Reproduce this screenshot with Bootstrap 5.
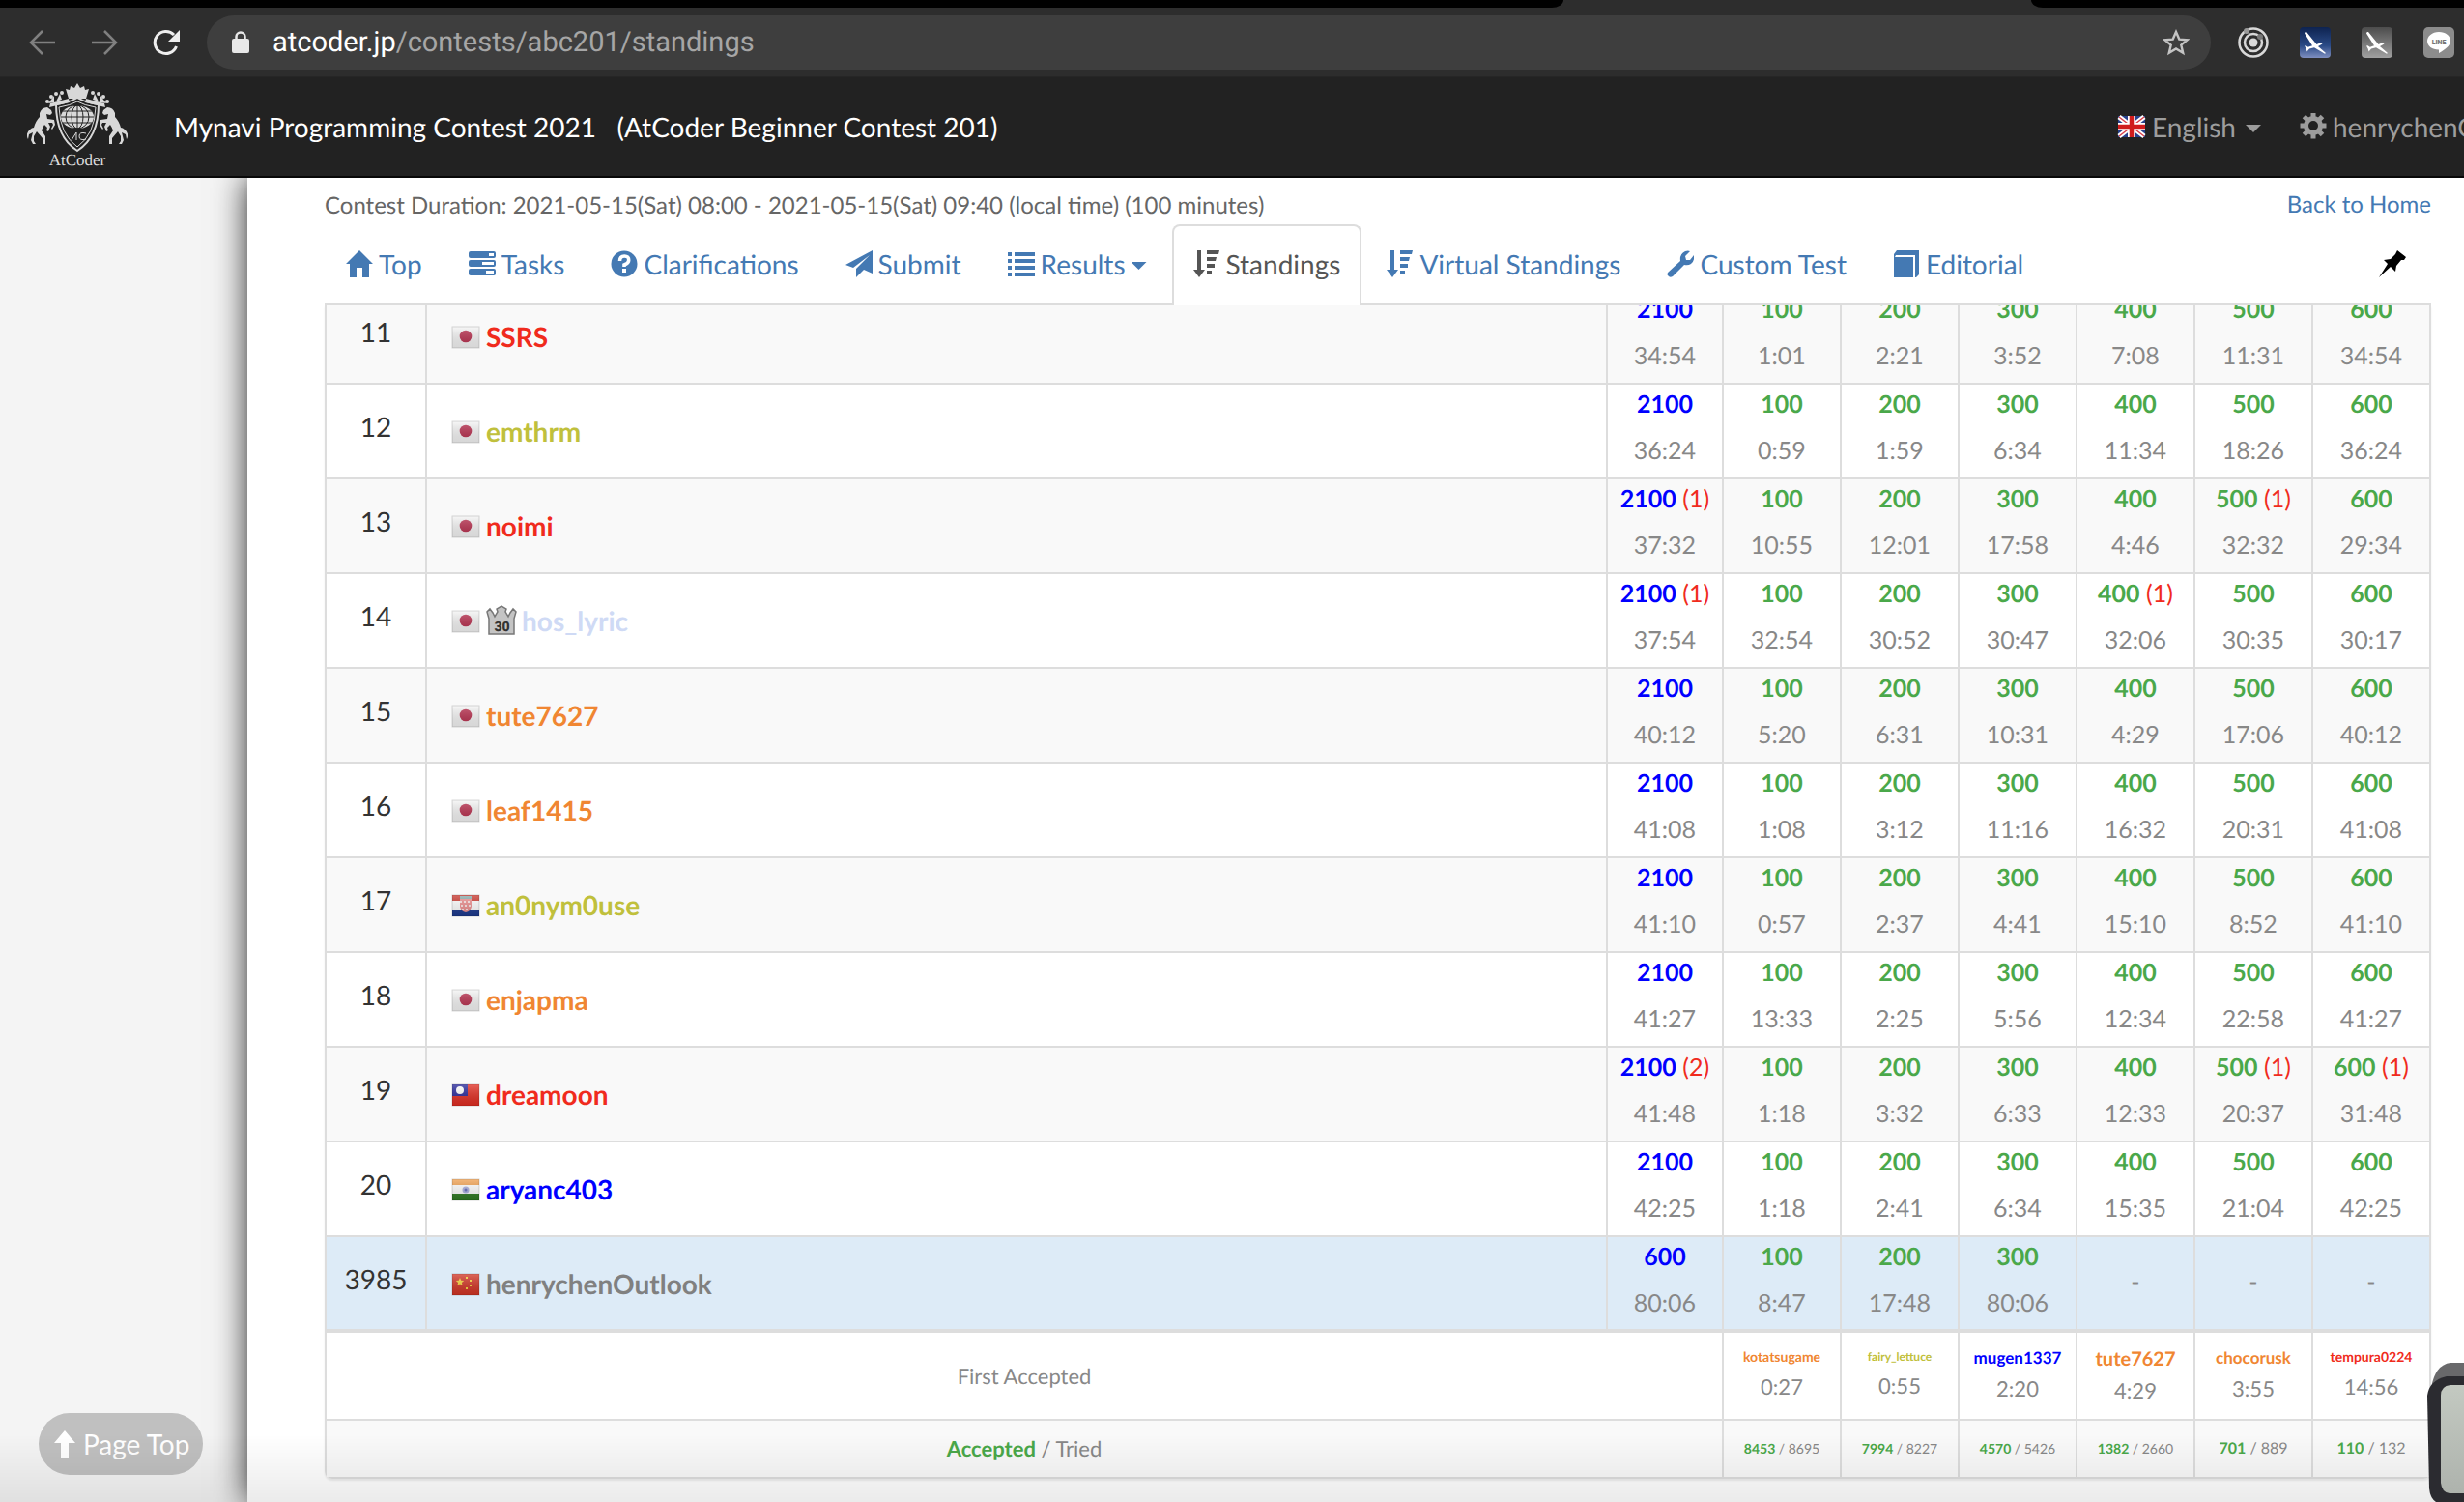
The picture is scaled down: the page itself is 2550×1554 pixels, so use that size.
<!DOCTYPE html>
<html lang="en">
<head>
<meta charset="utf-8">
<meta name="viewport" content="width=device-width, initial-scale=1">
<title>Standings - AtCoder Beginner Contest 201</title>
<link href="https://cdn.jsdelivr.net/npm/bootstrap@5.3.0/dist/css/bootstrap.min.css" rel="stylesheet">
<style>
body{font-family:Lato,"Open Sans",sans-serif;font-size:28px;line-height:40px;color:#333;background:#f4f4f4;min-height:100vh;overflow:hidden;text-rendering:geometricPrecision}
svg{display:block;flex:none}
a{color:#4479b3;text-decoration:none}
.tabstrip{height:8px;background:#000}
.activetab{width:508px;margin-right:436px;height:8px;background:#2d2d2d;position:relative}
.activetab::before,.activetab::after{content:"";position:absolute;top:0;width:12px;height:8px;background:#000}
.activetab::before{left:0;border-bottom-right-radius:12px 8px}
.activetab::after{right:0;border-bottom-left-radius:12px 8px}
.toolbar{height:72px;background:#2d2d2d;padding:0 10px 0 30px;border-bottom:1px solid #262626}
.tool{background:none;border:0;padding:0;line-height:0}
.tool + .tool{margin-left:36px}
.omnibox{height:56px;border-radius:28px;background:#3e3e3e;padding:0 22px 0 26px;margin:0 28px}
.urltext{font:29px/40px Roboto,sans-serif;color:#a6a6a6;white-space:nowrap}
.urltext b{font-weight:400;color:#fff}
.extensions{gap:32px}
.mainnav{height:104px;background:#222;border-bottom:2px solid #080808;padding:0 0 0 28px;white-space:nowrap}
.mainnav .title{color:#fff}
.mainnav .side{gap:40px}
.mainnav .side a{color:#9d9d9d;gap:6px}
.who{width:170px;overflow:hidden}
.caretdown{width:16px;height:8px;background:currentColor;clip-path:polygon(0 0,100% 0,50% 100%);margin-top:4px}
.sheet{margin-left:256px;padding:0 34px 0 80px;background:#fff;box-shadow:0 0 32px rgba(0,0,0,.85);min-height:calc(100vh - 184px)}
.page{overflow:hidden;position:relative}
.info{font-size:24px;line-height:34px;color:#666;padding-top:12px;height:48px}
.info a{line-height:31px}
.tabs{border-bottom:2px solid #ddd;height:84px;gap:4px}
.tabs a{display:flex;align-items:center;gap:6px;border:2px solid transparent;border-bottom:0;padding:18px 20px 20px;height:82px}
.tabs a.on{color:#555;border-color:#ddd;border-radius:8px 8px 0 0;background:#fff;height:84px;margin-bottom:-2px;padding-bottom:22px}
.tabs .pin{margin-left:auto;padding-right:24px}
.clip{overflow:hidden;border-radius:0 0 8px 8px;box-shadow:0 2px 2px rgba(0,0,0,.08)}
.rank-table{margin:-18px 0 0;width:100%;table-layout:fixed;border-collapse:collapse;text-align:center}
.rank-table td{border:2px solid #ddd;padding:0}
.rank-table tbody tr{height:98px}
.rank-table tbody tr:nth-child(odd),.rank-table tfoot tr:last-child{background:#f9f9f9}
.rank-table tbody tr.me{background:#ddebf7}
.rank-table .num{padding-bottom:10px}
.rank-table .who-cell{text-align:left;padding-left:24px}
.who-cell div{gap:5px}
.who-cell a{font-weight:700}
.rank-table .none{padding-bottom:4px}
.pt{vertical-align:top}
.pt p,.none{font-size:25px;line-height:40px;margin:0;color:#888;white-space:nowrap}
.pt p+p{margin-top:8px}
.pt b,.ac{font-weight:700;color:#4aa84a}
.pt .tot{color:#00f}
.pt i{font-style:normal;color:#f02b1d}
.rank-table tfoot{border-top:4px solid #ddd;color:#888;font-size:22px}
.first{height:92px}
.rank-table .first td{vertical-align:top;padding-top:14px}
.rank-table .first td:first-child{vertical-align:middle;padding:0}
.first p{margin:0;line-height:40px;font-size:22px}
.first a{display:block;font-weight:700}
.tried{height:60px}
.s12{font-size:12px;line-height:21px}.s14{font-size:14px;line-height:22px}.s16{font-size:16px;line-height:22px}.s17{font-size:17px;line-height:24px}.s20{font-size:20px;line-height:26px}
.red{color:#f02b1d}.orange{color:#f08632}.yellow{color:#c0c03c}.blue{color:#00f}.pale{color:#cfdaf5}.gray{color:#808080}
.pagetop{position:fixed;left:40px;bottom:28px;height:64px;border:0;border-radius:32px;background:#c0c0c0;color:#fff;padding:0 14px 0 16px;gap:8px}
.dockshade{position:fixed;left:0;right:0;bottom:0;height:70px;background:linear-gradient(rgba(0,0,0,0),rgba(0,0,0,.08));pointer-events:none}
.gadget{position:fixed;right:0;bottom:0}
</style>
<script src="https://cdn.jsdelivr.net/npm/bootstrap@5.3.0/dist/js/bootstrap.bundle.min.js"></script>
</head>
<body>
<svg width="0" height="0" class="position-absolute" aria-hidden="true">
<defs><linearGradient id="gloss" x2="0" y2="1"><stop stop-color="#fff" stop-opacity=".25"/><stop offset="1" stop-color="#000" stop-opacity=".12"/></linearGradient></defs>
<symbol id="jp" viewBox="0 0 32 32"><rect x="2" y="6" width="28" height="22" fill="#f5f5f5"/><circle cx="16" cy="16" r="6.3" fill="#b9304f"/></symbol>
<symbol id="hr" viewBox="0 0 32 32"><path fill="#c9372e" d="M2 6h28v7H2z"/><path fill="#fff" d="M2 12h28v10H2z"/><path fill="#1d3a8f" d="M2 22h28v6H2z"/><path fill="#ee8f8f" d="M10 9h12v9q-1 5-6 6-5-1-6-6z"/><path stroke="#fff" stroke-width="1.500" stroke-dasharray="2 2" d="M10 13h12M11 17h10M12 21h8"/><path fill="#8aa" d="M10 7h12v3H10z"/></symbol>
<symbol id="tw" viewBox="0 0 32 32"><path fill="#e22d22" d="M2 6h28v22H2z"/><path fill="#26269a" d="M2 6h16v12H2z"/><circle cx="10" cy="12" r="4" fill="#fff"/></symbol>
<symbol id="in" viewBox="0 0 32 32"><path fill="#f0a050" d="M2 6h28v7H2z"/><path fill="#fff" d="M2 12h28v10H2z"/><path fill="#2f7a22" d="M2 21h28v7H2z"/><circle cx="16" cy="17" r="3.500" fill="#aab0e0"/><circle cx="16" cy="17" r="1.500" fill="#6068b8"/></symbol>
<symbol id="cn" viewBox="0 0 32 32"><path fill="#d23424" d="M2 6h28v22H2z"/><path fill="#f8d33a" d="m10 10 1.200 2.800 3 .2-2.300 2 .8 3-2.700-1.600-2.700 1.600.8-3-2.300-2 3-.2zM16 9h2v2h-2zM20 12h2v2h-2zM20 17h2v2h-2zM16 20h2v2h-2z"/></symbol>
<symbol id="sort" viewBox="0 0 28 28"><path d="M4 0h4v20h4l-6 8-6-8h4zM14 0h13l-1 4H14zM14 7h10l-1 4h-9zM14 14h8v4h-8zM14 21h5v4h-5z"/></symbol>
<symbol id="plane" viewBox="0 0 32 32"><path fill="#fff" d="M5 6.500q0-2 2-1.500l10.500 13 4.500-2q3 .5.500 2l-3.500 2 8 7-1 .8-11-6.500-5 1.200-2.500 3-.8-3-1.700-3 1.500-.3 2.200 1.600 4.300-1.600z"/></symbol>
</svg>

<header>
<div class="tabstrip d-flex justify-content-end"><div class="activetab"></div></div>
<div class="toolbar d-flex align-items-center">
<button class="tool" aria-label="Back"><svg width="28" height="28" fill="none" stroke="#808080" stroke-width="2.500"><path d="M27 14H2M14 2 2 14l12 12"/></svg></button>
<button class="tool" aria-label="Forward"><svg width="28" height="28" fill="none" stroke="#808080" stroke-width="2.500"><path d="M1 14h25M14 2l12 12-12 12"/></svg></button>
<button class="tool" aria-label="Reload"><svg width="28" height="28" fill="none" stroke="#eee" stroke-width="3"><path d="M24.500 18a11.500 11.500 0 1 1-2.500-12"/><path fill="#eee" stroke="none" d="M28 1v12H16z"/></svg></button>
<div class="omnibox d-flex align-items-center flex-grow-1">
<svg width="18" height="24" viewBox="0 0 18 24"><path fill="#e8e8e8" d="M2 8h14q2 0 2 2v11q0 2-2 2H2q-2 0-2-2V10q0-2 2-2z"/><path fill="none" stroke="#e8e8e8" stroke-width="2.500" d="M4.500 9V6a4.500 4.500 0 0 1 9 0v3"/></svg>
<div class="urltext flex-grow-1 ms-4"><b>atcoder.jp</b>/contests/abc201/standings</div>
<button class="tool" aria-label="Bookmark"><svg width="28" height="28" viewBox="0 0 28 28" fill="none" stroke="#c4c4c4" stroke-width="2.400"><path d="m14 3 3.300 7.600 8.200.7-6.200 5.400 1.900 8L14 20.400 6.800 24.700l1.900-8-6.200-5.400 8.200-.7z"/></svg></button>
</div>
<div class="extensions d-flex flex-shrink-0">
<svg width="32" height="32" fill="none" stroke="#d8d8d8" stroke-width="2.500"><circle cx="16" cy="16" r="14.500"/><circle cx="16" cy="16" r="9"/><circle cx="16" cy="16" r="4.500" fill="#d8d8d8" stroke="none"/><circle cx="9" cy="4" r="3" fill="#999" stroke="none"/><circle cx="23" cy="10" r="3" fill="#777" stroke="none"/></svg>
<svg width="32" height="32"><defs><linearGradient id="sky" x2="0" y2="1"><stop stop-color="#0e2350"/><stop offset=".6" stop-color="#2a4a86"/><stop offset="1" stop-color="#7f8fc0"/></linearGradient></defs><rect width="32" height="32" rx="4" fill="url(#sky)"/><use href="#plane"/></svg>
<svg width="32" height="32"><defs><linearGradient id="fog" x2="0" y2="1"><stop stop-color="#4c4c4c"/><stop offset="1" stop-color="#a0a0a0"/></linearGradient></defs><rect width="32" height="32" rx="4" fill="url(#fog)"/><use href="#plane"/></svg>
<svg width="32" height="32"><rect width="32" height="32" rx="5" fill="#8c8c8c"/><path fill="#fff" d="M16 5c7 0 12 4 12 9.500 0 5-6 9-12 12.500v-3.500C9 23.500 4 19.500 4 14.500S9 5 16 5z"/><text x="16" y="17.500" font-family="Roboto" font-weight="900" font-size="7" text-anchor="middle" fill="#777">LINE</text></svg>
</div>
</div>
<nav class="mainnav d-flex align-items-center">
<a href="#" aria-label="AtCoder" class="me-5"><svg width="104" height="92" viewBox="0 0 104 92">
<g fill="#d8d8d8"><path d="m52 1 3 5 4-2 1 4 4-1-3 10H43L40 7l4 1 1-4 4 2z"/><path d="m43 17-19 5-1 4 21-5zM61 17l19 5 1 4-21-5z"/><circle cx="21" cy="20" r="2"/><circle cx="25" cy="15" r="2"/><circle cx="30" cy="12" r="2"/><circle cx="36" cy="11" r="2"/><circle cx="68" cy="11" r="2"/><circle cx="74" cy="12" r="2"/><circle cx="79" cy="15" r="2"/><circle cx="83" cy="20" r="2"/><path d="m22 22 6-8v7zM30 20l4-8 2 6zM82 22l-6-8v7zM74 20l-4-8-2 6z"/>
<ellipse cx="52" cy="36" rx="17" ry="12"/>
<path id="horse" d="M13 32q2-6 8-6l4 3 1 3-2 2-4-1 1 5 7 1 1 5-3 5-1-1 2-4-1-2-4 0 2 4-2 5-2-1 1-3-3-3q-2 3-3 6l4 6 0 8-3 0 0-6-6-7-3 5 0 5 2 3-3 0-2-4 2-8-4 2-1 5q-3-6 2-10 2-2 4-2 2-7 6-11z"/><use href="#horse" transform="matrix(-1 0 0 1 104 0)"/></g>
<path fill="none" stroke="#d8d8d8" stroke-width="2" d="M30 23q14-2 22-7 8 5 22 7 0 34-22 48-22-14-22-48z"/><path fill="none" stroke="#d8d8d8" d="M33 26q12-2 19-6 7 4 19 6-1 28-19 41-18-13-19-41zM46 60l5-8v8M61 53q-7-2-7 3t7 3"/>
<path fill="none" stroke="#222" d="M35 36h34M37 30h30M37 42h30M52 24v24"/><ellipse cx="52" cy="36" rx="6" ry="12" fill="none" stroke="#222"/><ellipse cx="52" cy="36" rx="12" ry="12" fill="none" stroke="#222"/>
<text x="52" y="86" text-anchor="middle" font-family="Liberation Serif,serif" font-size="17" fill="#ddd">AtCoder</text></svg></a>
<a href="#" class="title">Mynavi Programming Contest 2021&nbsp; &nbsp;(AtCoder Beginner Contest 201)</a>
<div class="side d-flex align-items-center ms-auto">
<a href="#" class="d-flex align-items-center"><svg width="30" height="24" viewBox="0 0 30 24"><path fill="#27408b" d="M1 1h28v22H1z"/><path stroke="#fff" stroke-width="5" d="m2 2 26 20M28 2 2 22"/><path stroke="#d8404a" stroke-width="1.500" d="m2 2 26 20M28 2 2 22"/><path stroke="#fff" stroke-width="8" d="M15 1v22M1 12h28"/><path stroke="#d01c1c" stroke-width="4.500" d="M15 1v22M1 12h28"/></svg><span>English</span><span class="caretdown ms-1"></span></a>
<a href="#" class="d-flex align-items-center who"><svg width="28" height="28" viewBox="-14 -13 28 28"><circle r="7.500" fill="none" stroke="#9d9d9d" stroke-width="5"/><path stroke="#9d9d9d" stroke-width="5" d="M0-13.500v5M0 8.500v5M-13.500 0h5M8.500 0h5M-9.500-9.500l4 4M5.500 5.500l4 4M9.500-9.500l-4 4M-5.500 5.500l-4 4"/></svg><span>henrychenOutlook</span></a>
</div>
</nav>
</header>

<main class="page">
<div class="sheet">
<div class="info d-flex justify-content-between"><span>Contest Duration: 2021-05-15(Sat) 08:00 - 2021-05-15(Sat) 09:40 (local time) (100 minutes)</span><a href="#">Back to Home</a></div>
<nav class="tabs d-flex" aria-label="Contest">
<a href="#"><svg width="28" height="28" fill="currentColor"><path d="m14 0 14 14h-4v14h-7V18h-6v10H4V14H0z"/></svg>Top</a>
<a href="#"><svg width="28" height="28" viewBox="0 0 28 28"><g fill="currentColor"><rect y="1" width="28" height="7" rx="2"/><rect y="10" width="28" height="7" rx="2"/><rect y="19" width="28" height="7" rx="2"/></g><path fill="#fff" d="M21 3h5v3h-5zM14 12h12v3H14zM18 21h8v3h-8z"/></svg>Tasks</a>
<a href="#"><svg width="28" height="28" viewBox="0 0 28 28"><circle cx="14" cy="14" r="13.500" fill="currentColor"/><path fill="none" stroke="#fff" stroke-width="3.600" d="M9.500 11q0-5 4.700-5t4.500 4.200q0 3-4.700 4.800v2"/><path fill="#fff" d="M12 19h4v4h-4z"/></svg>Clarifications</a>
<a href="#"><svg width="28" height="28" fill="currentColor"><path d="M28 0v24l-9-4-8 8v-9L25 5 8 18l-8-3z"/></svg>Submit</a>
<a href="#"><svg width="28" height="28" fill="currentColor"><path d="M0 2h4v4H0zM7 2h21v4H7zM0 9h4v4H0zM7 9h21v4H7zM0 16h4v4H0zM7 16h21v4H7zM0 23h4v4H0zM7 23h21v4H7z"/></svg>Results<span class="caretdown"></span></a>
<a href="#" class="on" aria-current="page"><svg width="28" height="28" fill="currentColor"><use href="#sort"/></svg>Standings</a>
<a href="#"><svg width="28" height="28" fill="currentColor"><use href="#sort"/></svg>Virtual Standings</a>
<a href="#"><svg width="28" height="28" fill="currentColor"><path d="M1 23 14 11q-1-7 5-10 3-1 5 0l-5 5 1 4 4 0 4-5q1 6-3 9-3 2-7 1L6 27q-3 2-5-1-1-1 0-3z"/></svg>Custom Test</a>
<a href="#"><svg width="28" height="28" fill="currentColor"><path d="M4 0h23v25l-3 3H23V5H3L2 7h19v21H1V4z"/></svg>Editorial</a>
<a href="#" class="pin" aria-label="Pin"><svg width="28" height="28"><path d="m19 0 9 7-2 3-3 0-5 6-1 6-5-5L0 28l9-14-4-4 7-1 5-5z"/></svg></a>
</nav>
<div class="clip">
<table class="rank-table"><colgroup><col style="width:104px"><col><col style="width:120px"><col span="6" style="width:122px"></colgroup>
<tbody id="rows"></tbody>
<tfoot>
<tr class="first"><td colspan="3">First Accepted</td>
<td><a href="#" class="orange s14">kotatsugame</a><p>0:27</p></td><td><a href="#" class="yellow s12">fairy_lettuce</a><p>0:55</p></td><td><a href="#" class="blue s17">mugen1337</a><p>2:20</p></td><td><a href="#" class="orange s20">tute7627</a><p>4:29</p></td><td><a href="#" class="orange s17">chocorusk</a><p>3:55</p></td><td><a href="#" class="red s14">tempura0224</a><p>14:56</p></td></tr>
<tr class="tried"><td colspan="3"><span class="ac">Accepted</span> / Tried</td>
<td class="s14"><span class="ac">8453</span> / 8695</td><td class="s14"><span class="ac">7994</span> / 8227</td><td class="s14"><span class="ac">4570</span> / 5426</td><td class="s14"><span class="ac">1382</span> / 2660</td><td class="s16"><span class="ac">701</span> / 889</td><td class="s16"><span class="ac">110</span> / 132</td></tr>
</tfoot>
</table>
</div>
</div>
</main>
<button class="pagetop d-flex align-items-center"><svg width="22" height="28" fill="#fff"><path d="m11 0 11 13h-7v15H7V13H0z"/></svg>Page Top</button>
<div class="dockshade"></div>
<svg class="gadget" width="38" height="144" viewBox="0 0 38 144" aria-hidden="true"><defs><linearGradient id="lcd" x2="0" y2="1"><stop stop-color="#c3c9c1"/><stop offset="1" stop-color="#aeb3ad"/></linearGradient></defs><path fill="#69696b" d="M38 0H24Q8 2 4 26V50H38z"/><path fill="#2b2b30" d="M38 14H20Q2 18 0 34l2 96q1 10 7 14h29z"/><path fill="url(#lcd)" d="M38 23H24q-10 1-10 11v90q1 10 9 11h15z"/></svg>
<script>
// rank, flag, colour, name, then "time misses" for the total and tasks A-F
const standings = [
"11|jp|red|SSRS|34:54|1:01|2:21|3:52|7:08|11:31|34:54",
"12|jp|yellow|emthrm|36:24|0:59|1:59|6:34|11:34|18:26|36:24",
"13|jp|red|noimi|37:32 1|10:55|12:01|17:58|4:46|32:32 1|29:34",
"14|jp|pale|hos_lyric|37:54 1|32:54|30:52|30:47|32:06 1|30:35|30:17",
"15|jp|orange|tute7627|40:12|5:20|6:31|10:31|4:29|17:06|40:12",
"16|jp|orange|leaf1415|41:08|1:08|3:12|11:16|16:32|20:31|41:08",
"17|hr|yellow|an0nym0use|41:10|0:57|2:37|4:41|15:10|8:52|41:10",
"18|jp|orange|enjapma|41:27|13:33|2:25|5:56|12:34|22:58|41:27",
"19|tw|red|dreamoon|41:48 2|1:18|3:32|6:33|12:33|20:37 1|31:48 1",
"20|in|blue|aryanc403|42:25|1:18|2:41|6:34|15:35|21:04|42:25",
"3985|cn|gray|henrychenOutlook|80:06|8:47|17:48|80:06|-|-|-"];
const points = [2100,100,200,300,400,500,600];
const crown = '<svg width="32" height="32" viewBox="0 0 32 32"><path fill="#c4c4c4" stroke="#777" stroke-width="1.500" d="M3 30V14L1 7l3-3 3 4 2 4 3-5-1-3 5-3 5 3-1 3 3 5 2-4 3-4 3 3-2 7v16z"/><text x="16.500" y="27" font-family="Roboto" font-weight="900" font-size="14" text-anchor="middle" fill="#333">30</text></svg>';
document.getElementById('rows').innerHTML = standings.map(line => {
  const [rank, flag, color, name, ...times] = line.split('|');
  const cells = times.map((t, i) => {
    if (t === '-') return '<td class="none">-</td>';
    const [time, miss] = t.split(' ');
    const score = rank === '3985' && i === 0 ? 600 : points[i];
    return `<td class="pt"><p><b${i ? '' : ' class="tot"'}>${score}</b>${miss ? ` <i>(${miss})</i>` : ''}</p><p>${time}</p></td>`;
  }).join('');
  return `<tr${rank === '3985' ? ' class="me"' : ''}><td class="num">${rank}</td><td class="who-cell"><div class="d-flex align-items-center"><svg width="32" height="32"><use href="#${flag}"/><rect x="2" y="6" width="28" height="22" fill="url(#gloss)" stroke="#000" stroke-opacity=".15"/></svg>${name === 'hos_lyric' ? crown : ''}<a href="#" class="${color}">${name}</a></div></td>${cells}</tr>`;
}).join('');
</script>
</body>
</html>
